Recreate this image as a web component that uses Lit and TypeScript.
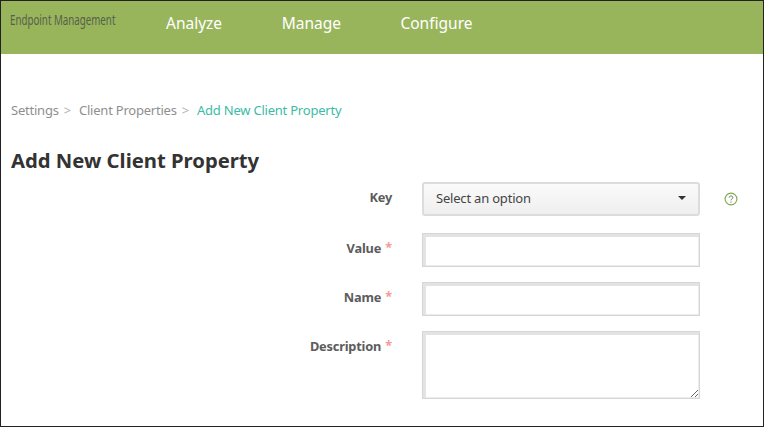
import { LitElement, html, css } from "lit";
import { customElement } from "lit/decorators.js";

@customElement("app-root")
export class AppRoot extends LitElement {
  static styles = css`
    :host {
      display: block;
      width: 764px;
      height: 427px;
      box-sizing: border-box;
      border: 1px solid #222;
      background: #fff;
      overflow: hidden;
      font-family: "Noto Sans", "Open Sans", sans-serif;
      color: #5c5c5c;
    }

    .top {
      height: 53px;
      background: #99b55c;
      display: flex;
      align-items: flex-start;
    }

    .brand {
      width: 165px;
      padding: 9px 0 0 9px;
      box-sizing: border-box;
      font-size: 15px;
      line-height: 19px;
      color: #55604a;
      white-space: nowrap;
    }

    .brand span {
      display: inline-block;
      transform: scaleX(0.65);
      transform-origin: left center;
    }

    .nav {
      display: flex;
      gap: 59.5px;
      padding-top: 10px;
      font-size: 15.5px;
      line-height: 24px;
      color: #fff;
    }

    .crumbs {
      display: flex;
      padding: 46px 0 0 10px;
      font-size: 13px;
      letter-spacing: -0.22px;
      line-height: 20px;
      color: #8f8f8f;
      white-space: nowrap;
    }

    .crumbs .sep {
      margin: 0 8px 0 5px;
      color: #b0b0b0;
    }

    .crumbs .here {
      color: #3cbba6;
    }

    h1 {
      margin: 0;
      padding: 26px 0 0 10px;
      font-size: 20.25px;
      line-height: 28px;
      font-weight: 700;
      color: #333;
    }

    .form {
      display: grid;
      grid-template-columns: 391px 278px auto;
      column-gap: 30px;
      row-gap: 15px;
      margin-top: 8px;
      align-items: start;
    }

    .form label {
      justify-self: end;
      grid-column: 1;
      font-size: 12.8px;
      letter-spacing: -0.2px;
      line-height: 20px;
      font-weight: 700;
      white-space: nowrap;
      padding-top: 5px;
    }

    .form label i {
      font-style: normal;
      font-weight: 700;
      color: #f59a9a;
      margin-left: 1px;
      position: relative;
      top: -1px;
    }

    .select {
      grid-column: 2;
      height: 34px;
      box-sizing: border-box;
      border: 2px solid #dcdcdc;
      border-radius: 3px;
      background: linear-gradient(#fafafa, #efefef);
      display: flex;
      align-items: center;
      justify-content: space-between;
      padding: 0 12px 3px;
      font-size: 13px;
      letter-spacing: -0.2px;
      color: #444;
      margin-bottom: 2px;
    }

    .caret {
      width: 0;
      height: 0;
      border-left: 4px solid transparent;
      border-right: 4px solid transparent;
      border-top: 4px solid #333;
    }

    .help {
      grid-column: 3;
      display: block;
      margin: 10px 0 0 -6px;
    }

    input,
    textarea {
      grid-column: 2;
      display: block;
      box-sizing: border-box;
      width: 278px;
      margin: 0;
      padding: 0;
      background: #fff;
      border: 1px solid #d6d6d6;
      box-shadow: inset 3px 3px 0 #e3e3e3, inset -1px -1px 0 #ececec;
      border-radius: 0;
      outline: none;
    }

    input {
      height: 34px;
    }

    textarea {
      height: 68px;
      resize: vertical;
    }
  `;

  render() {
    return html`
      <div class="top">
        <div class="brand"><span>Endpoint Management</span></div>
        <div class="nav">
          <span>Analyze</span><span>Manage</span><span>Configure</span>
        </div>
      </div>
      <div class="crumbs">
        <span>Settings</span><span class="sep">&gt;</span>
        <span>Client Properties</span><span class="sep">&gt;</span>
        <span class="here">Add New Client Property</span>
      </div>
      <h1>Add New Client Property</h1>
      <div class="form">
        <label>Key</label>
        <div class="select"><span>Select an option</span><span class="caret"></span></div>
        <svg class="help" width="14" height="14" viewBox="0 0 14 14">
          <circle cx="7" cy="7" r="5.9" fill="none" stroke="#7fa650" stroke-width="1.1"></circle>
          <path d="M5.2 5.6c0-1 .8-1.7 1.8-1.7s1.8.7 1.8 1.6c0 1.4-1.8 1.4-1.8 2.8" fill="none" stroke="#5c7a3a" stroke-width="1"></path>
          <circle cx="7" cy="10.1" r=".7" fill="#5c7a3a"></circle>
        </svg>
        <label>Value <i>*</i></label>
        <input type="text" />
        <label>Name <i>*</i></label>
        <input type="text" />
        <label>Description <i>*</i></label>
        <textarea></textarea>
      </div>
    `;
  }
}
